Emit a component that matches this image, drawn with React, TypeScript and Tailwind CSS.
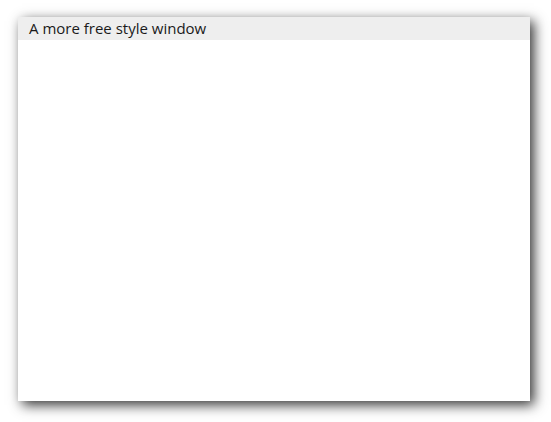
export default function App() {
  return (
    <div className="w-[551px] h-[422px] bg-white pt-[17px] pl-[18px]">
      <div className="w-[512px] h-[384px] bg-white flex flex-col shadow-[4px_4px_12px_rgba(0,0,0,0.8)]">
        <div className="h-[23px] bg-[#eeeeee] pl-[11px] flex items-center text-[15px] text-[#1a1a1a] leading-none" style={{ fontFamily: '"Open Sans", "Noto Sans", sans-serif' }}>
          A more free style window
        </div>
        <div className="flex-1" />
      </div>
    </div>
  );
}
